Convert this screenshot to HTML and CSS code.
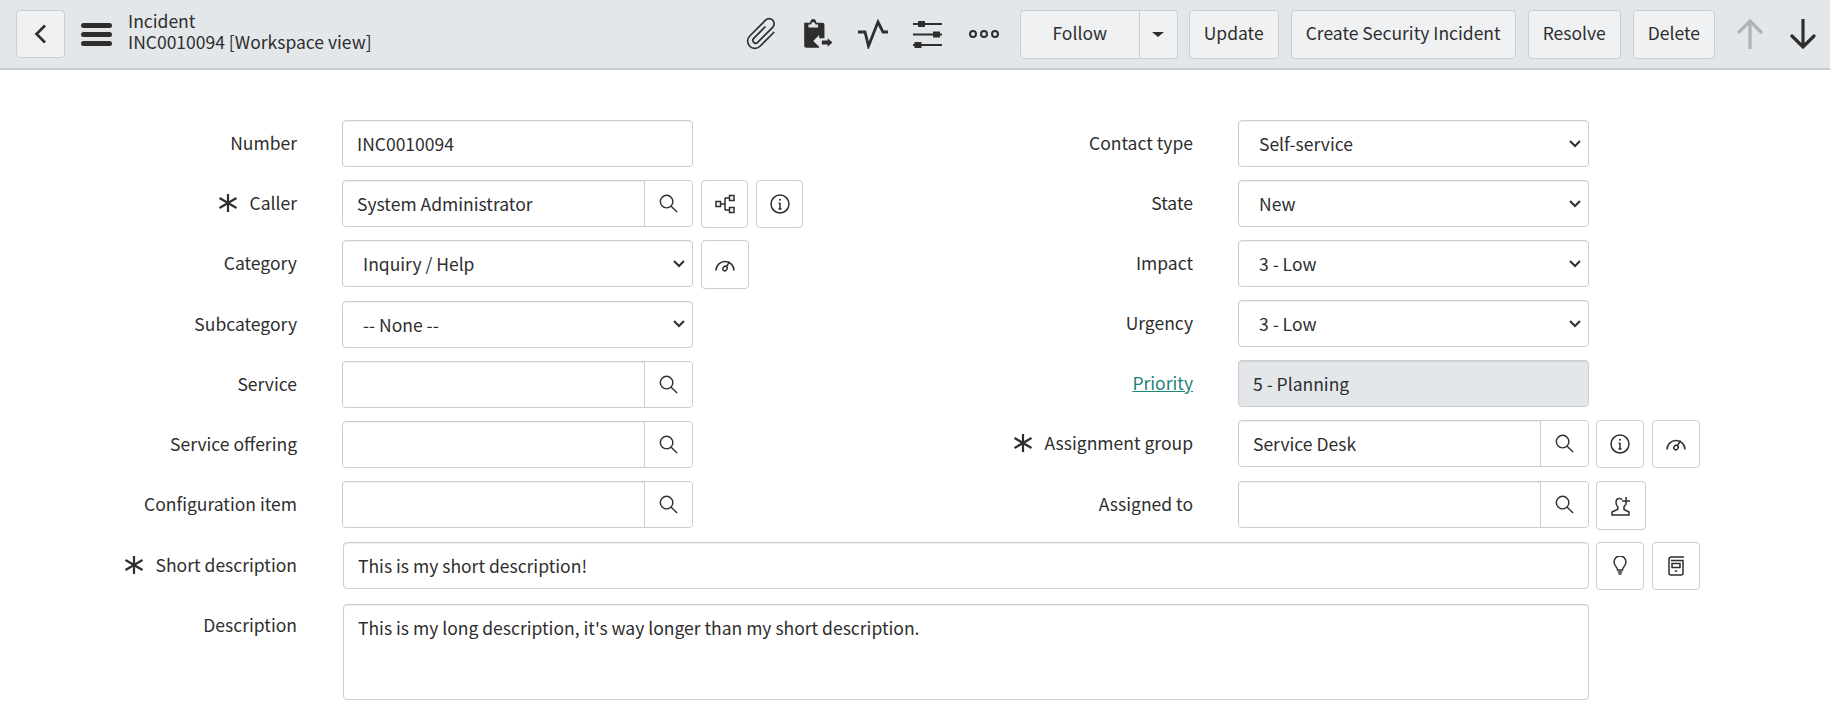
FILE: index.html
```html
<!DOCTYPE html>
<html lang="en">
<head>
    <meta charset="UTF-8">
    <title>Incident | INC0010094</title>
    <link rel="stylesheet" href="styles.css">
</head>
<body>
    <!-- Iconos reutilizables -->
    <svg class="icon-defs" aria-hidden="true">
        <symbol id="i-search" viewBox="0 0 20 20"><circle cx="8" cy="8" r="6.6"/><path d="M12.8 12.8 19 19"/></symbol>
        <symbol id="i-info" viewBox="0 0 20 20"><circle cx="10" cy="10" r="9"/><path d="M10 9v6M8.4 15h3.2M8.6 9H10"/><circle class="dot" cx="10" cy="5.8" r="1"/></symbol>
        <symbol id="i-gauge" viewBox="0 0 20 14"><path d="M1 12.5A9 9 0 0 1 19 12.5"/><ellipse cx="10" cy="10.5" rx="2" ry="2.4" transform="rotate(35 10 10.5)"/><path d="M11.5 8.5 14.6 3.6"/></symbol>
        <symbol id="i-tree" viewBox="0 0 20 20"><path d="M1 7.5h4.5v5H1zM14.500 1.500H19v5h-4.500zM14.500 13.500H19v5h-4.500zM5.500 10H10M10 4h4.500M10 16h4.500M10 4v12"/></symbol>
        <symbol id="i-required" viewBox="0 0 20 18"><path d="M10 0v18M1.500 4 18.500 14M18.500 4 1.500 14"/></symbol>
    </svg>

    <header class="topbar">
        <button class="back-btn" type="button" aria-label="Back">
            <svg width="13" height="20" viewBox="0 0 13 20"><path d="M11 1.500 2.500 10 11 18.500"/></svg>
        </button>
        <div class="hamburger"><span></span><span></span><span></span></div>
        <div class="title">
            <div>Incident</div>
            <div>INC0010094 [Workspace view]</div>
        </div>

        <div class="tools">
            <span class="tool">
                <svg class="stroke-thin" width="38" height="38" viewBox="0 0 34 34"><path transform="rotate(45 17 17)" d="M14.500 10V25a2.500 2.500 0 0 0 5 0V6a4.500 4.500 0 0 0-9 0V26a6.500 6.500 0 0 0 13 0V8"/></svg>
            </span>
            <span class="tool">
                <svg width="32" height="32" viewBox="0 0 30 30"><path class="solid" d="M3 4.500h5.500C9 2 10 1 11.500 1S14 2 14.500 4.500H20a2 2 0 0 1 2 2V19h-5v-3l-5.500 5.500L17 27v1H5a2 2 0 0 1-2-2zM7 6v3h9V6h-2.500c-.5-1.500-1-2-2-2s-1.500.5-2 2z"/><path class="solid" d="M19.500 21.200H25V19l4.500 4-4.500 4v-2.200h-5.500z"/></svg>
            </span>
            <span class="tool">
                <svg class="stroke-bold" width="32" height="30" viewBox="0 0 32 30"><path d="M1 13h7l3.500 14L21 3l5 10h5"/></svg>
            </span>
            <span class="tool">
                <svg width="30" height="27" viewBox="0 0 30 27"><path class="stroke-mid" d="M0 3h29M0 13.500h29M0 24h29"/><path class="solid" d="M5 0h7v6H5zM20 10.500h7v6h-7zM1.500 21h7v6h-7z"/></svg>
            </span>
            <span class="tool">
                <svg class="stroke-mid" width="30" height="10" viewBox="0 0 30 10"><circle cx="4" cy="5" r="3"/><circle cx="15" cy="5" r="3"/><circle cx="26" cy="5" r="3"/></svg>
            </span>
        </div>

        <div class="btn-group">
            <button class="btn btn-follow" type="button">Follow</button>
            <button class="btn btn-caret" type="button" aria-label="More"><i class="caret"></i></button>
        </div>
        <button class="btn" type="button">Update</button>
        <button class="btn" type="button">Create Security Incident</button>
        <button class="btn" type="button">Resolve</button>
        <button class="btn" type="button">Delete</button>

        <span class="arrow arrow-off">
            <svg width="26" height="30" viewBox="0 0 26 30"><path d="M13 29V2M2 13 13 2 24 13"/></svg>
        </span>
        <span class="arrow">
            <svg width="26" height="30" viewBox="0 0 26 30"><path d="M13 1V28M2 17 13 28 24 17"/></svg>
        </span>
    </header>

    <form class="record-form">
        <div class="columns">
            <div class="column">
                <div class="field">
                    <label>Number</label>
                    <input class="control" type="text" value="INC0010094">
                </div>
                <div class="field">
                    <label><svg class="req"><use href="#i-required"/></svg>Caller</label>
                    <div class="lookup">
                        <input type="text" value="System Administrator">
                        <button type="button" aria-label="Search"><svg class="ico-search"><use href="#i-search"/></svg></button>
                    </div>
                    <button class="side-btn narrow" type="button" aria-label="Tree"><svg class="ico-md"><use href="#i-tree"/></svg></button>
                    <button class="side-btn narrow" type="button" aria-label="Info"><svg class="ico-md"><use href="#i-info"/></svg></button>
                </div>
                <div class="field">
                    <label>Category</label>
                    <select class="control"><option>Inquiry / Help</option></select>
                    <button class="side-btn tall" type="button" aria-label="Metric"><svg class="ico-gauge"><use href="#i-gauge"/></svg></button>
                </div>
                <div class="field">
                    <label>Subcategory</label>
                    <select class="control"><option>-- None --</option></select>
                </div>
                <div class="field">
                    <label>Service</label>
                    <div class="lookup">
                        <input type="text">
                        <button type="button" aria-label="Search"><svg class="ico-search"><use href="#i-search"/></svg></button>
                    </div>
                </div>
                <div class="field">
                    <label>Service offering</label>
                    <div class="lookup">
                        <input type="text">
                        <button type="button" aria-label="Search"><svg class="ico-search"><use href="#i-search"/></svg></button>
                    </div>
                </div>
                <div class="field">
                    <label>Configuration item</label>
                    <div class="lookup">
                        <input type="text">
                        <button type="button" aria-label="Search"><svg class="ico-search"><use href="#i-search"/></svg></button>
                    </div>
                </div>
            </div>

            <div class="column column-right">
                <div class="field">
                    <label>Contact type</label>
                    <select class="control"><option>Self-service</option></select>
                </div>
                <div class="field">
                    <label>State</label>
                    <select class="control"><option>New</option></select>
                </div>
                <div class="field">
                    <label>Impact</label>
                    <select class="control"><option>3 - Low</option></select>
                </div>
                <div class="field">
                    <label>Urgency</label>
                    <select class="control"><option>3 - Low</option></select>
                </div>
                <div class="field">
                    <label><a href="#">Priority</a></label>
                    <input class="control readonly" type="text" value="5 - Planning" readonly>
                </div>
                <div class="field field-group">
                    <label><svg class="req"><use href="#i-required"/></svg>Assignment group</label>
                    <div class="lookup">
                        <input type="text" value="Service Desk">
                        <button type="button" aria-label="Search"><svg class="ico-search"><use href="#i-search"/></svg></button>
                    </div>
                    <button class="side-btn" type="button" aria-label="Info"><svg class="ico-md"><use href="#i-info"/></svg></button>
                    <button class="side-btn" type="button" aria-label="Metric"><svg class="ico-gauge"><use href="#i-gauge"/></svg></button>
                </div>
                <div class="field">
                    <label>Assigned to</label>
                    <div class="lookup">
                        <input type="text">
                        <button type="button" aria-label="Search"><svg class="ico-search"><use href="#i-search"/></svg></button>
                    </div>
                    <button class="side-btn wide" type="button" aria-label="Assign to me">
                        <svg class="ico-md" viewBox="0 0 20 20"><path d="M8.500 2.500C6 2.500 5 4.500 5 6.500c0 2 .8 3.500 1.800 4.300v2.500L1 16v3h17v-3l-5-2.500v-2.800c.6-.6 1-1.200 1.200-2"/><path d="M8.500 2.500c1 0 2 .4 2.600 1.100M15 1v8M11 5h8"/></svg>
                    </button>
                </div>
            </div>
        </div>

        <div class="field field-full">
            <label><svg class="req"><use href="#i-required"/></svg>Short description</label>
            <input class="control" type="text" value="This is my short description!">
            <button class="side-btn" type="button" aria-label="Suggestion">
                <svg class="ico-md" viewBox="0 0 20 20"><path d="M7.500 14c0-3-3.500-4-3.500-8a6 6 0 0 1 12 0c0 4-3.500 5-3.500 8zM7.800 16h4.400M8.500 18h3"/></svg>
            </button>
            <button class="side-btn" type="button" aria-label="Knowledge">
                <svg class="ico-md" viewBox="0 0 20 20"><path d="M3 3.500V17a2 2 0 0 0 2 2h10a2 2 0 0 0 2-2V4.500H5M3 3.500A2.500 2.500 0 0 1 5 1h13M6 7.500h8v4H6z"/><path d="M8.800 15h2.400"/></svg>
            </button>
        </div>
        <div class="field field-full field-area">
            <label>Description</label>
            <textarea class="control">This is my long description, it's way longer than my short description.</textarea>
        </div>
    </form>
</body>
</html>
```

FILE: styles.css
```css
* {
    box-sizing: border-box;
}

html, body {
    height: 100%;
}

body {
    margin: 0;
    background: #ffffff;
    color: #2e2e2e;
    font-family: "Noto Sans CJK SC", "Open Sans", sans-serif;
    font-size: 17.5px;
    overflow: hidden;
}

.icon-defs {
    display: none;
}

button, input, select, textarea {
    font-family: inherit;
    font-size: 17.5px;
    color: #2e2e2e;
}

svg {
    fill: none;
    stroke: #2e2e2e;
    stroke-width: 1.5;
}

/* Barra superior */
.topbar {
    display: flex;
    align-items: center;
    height: 70px;
    padding-left: 16px;
    background: #e4e7ea;
    border-bottom: 2px solid #c9cbcd;
}

.back-btn {
    display: flex;
    align-items: center;
    justify-content: center;
    width: 49px;
    height: 48px;
    padding: 0;
    background: #f0f1f3;
    border: 1px solid #cbcdcf;
    border-radius: 4px;
}

.back-btn svg {
    stroke-width: 2.6;
}

.hamburger {
    display: flex;
    flex-direction: column;
    gap: 4px;
    width: 31px;
    margin-left: 16px;
}

.hamburger span {
    height: 5px;
    background: #2e2e2e;
    border-radius: 3px;
}

.title {
    margin-top: -7px;
    margin-left: 16px;
    line-height: 21px;
    white-space: nowrap;
}

.tools {
    display: flex;
    margin-left: auto;
    margin-right: 8px;
}

.tool {
    display: flex;
    align-items: center;
    justify-content: center;
    width: 55.500px;
    height: 48px;
}

.solid {
    fill: #2e2e2e;
    fill-rule: evenodd;
    stroke: none;
}

.stroke-thin {
    stroke-width: 1.500;
}

.stroke-mid {
    stroke-width: 2;
}

.stroke-bold {
    stroke-width: 2.800;
}

.btn {
    height: 49px;
    margin-right: 12px;
    padding: 0 14px 3px;
    background: #f0f1f3;
    border: 1px solid #cbcdcf;
    border-radius: 4px;
    line-height: 1;
    white-space: nowrap;
}

.btn-group {
    display: flex;
    margin-right: 11px;
}

.btn-follow {
    width: 120px;
    margin: 0;
    border-radius: 4px 0 0 4px;
}

.btn-caret {
    display: flex;
    align-items: center;
    justify-content: center;
    width: 38px;
    margin: 0;
    padding: 0;
    border-left: 0;
    border-radius: 0 4px 4px 0;
}

.caret {
    width: 0;
    height: 0;
    border-top: 5px solid #2e2e2e;
    border-left: 6px solid transparent;
    border-right: 6px solid transparent;
}

.arrow {
    display: flex;
    align-items: center;
    justify-content: center;
    width: 55px;
    height: 48px;
}

.arrow svg {
    stroke-width: 3.200;
    stroke-linecap: round;
}

.arrow-off {
    width: 50px;
    margin-left: -2px;
}

.arrow-off svg {
    stroke: #b1b3b5;
}

/* Formulario */
.record-form {
    padding-top: 50px;
}

.columns {
    display: flex;
}

.column {
    width: 896px;
}

.field {
    display: flex;
    align-items: flex-start;
    height: 47.240px;
    margin-bottom: 13px;
}

.column-right .field {
    height: 47px;
}

.column-right .field-group {
    margin-bottom: 14px;
}

.field label {
    display: flex;
    align-items: center;
    justify-content: flex-end;
    flex: 0 0 297px;
    height: 46px;
    margin-right: 45px;
    line-height: 46px;
    white-space: nowrap;
}

.field a {
    color: #1f8476;
}

.req {
    width: 20px;
    height: 18px;
    margin-right: 12px;
    stroke-width: 2.200;
}

.control {
    width: 351px;
    height: 47px;
    padding: 0 14px;
    background: #ffffff;
    border: 1px solid #cbcdcf;
    border-radius: 4px;
    box-shadow: inset 0 1px 1px rgba(0, 0, 0, 0.075);
    outline: none;
}

.column-right .lookup {
    margin-right: -1px;
}

select.control {
    padding: 0 0 0 20px;
    appearance: none;
    background-image: url("data:image/svg+xml,%3Csvg xmlns='http://www.w3.org/2000/svg' width='12' height='8' viewBox='0 0 12 8'%3E%3Cpath d='M1 1l5 5 5-5' fill='none' stroke='%232e2e2e' stroke-width='2'/%3E%3C/svg%3E");
    background-repeat: no-repeat;
    background-position: right 7px center;
}

.readonly {
    background: #e4e7ea;
}

.lookup {
    display: flex;
    width: 351px;
    height: 47px;
    background: #ffffff;
    border: 1px solid #cbcdcf;
    border-radius: 4px;
}

.lookup input {
    flex: 1;
    min-width: 0;
    padding: 0 14px;
    border: none;
    border-radius: 4px 0 0 4px;
    box-shadow: inset 0 1px 1px rgba(0, 0, 0, 0.075);
    outline: none;
}

.lookup button {
    display: flex;
    align-items: center;
    justify-content: center;
    width: 48px;
    padding: 0;
    background: #ffffff;
    border: none;
    border-left: 1px solid #cbcdcf;
    border-radius: 0 4px 4px 0;
}

.side-btn {
    display: flex;
    align-items: center;
    justify-content: center;
    flex: none;
    width: 48px;
    height: 48px;
    margin-left: 8px;
    padding: 0;
    background: #ffffff;
    border: 1px solid #cbcdcf;
    border-radius: 4px;
}

.side-btn.narrow {
    width: 47px;
}

.side-btn.tall {
    height: 49px;
}

.side-btn.wide {
    width: 50px;
    height: 49px;
}

.ico-search {
    width: 19px;
    height: 19px;
}

.ico-md {
    width: 20px;
    height: 20px;
}

.ico-gauge {
    width: 20px;
    height: 14px;
}

.dot {
    fill: #2e2e2e;
    stroke: none;
}

.field-full label {
    margin-right: 46px;
}

.field-full .control {
    width: 1246px;
    margin-right: -1px;
}

.field-area {
    height: 96px;
    margin: 15px 0 0;
}

.field-area label {
    margin-top: -2px;
}

.field-area textarea {
    height: 96px;
    padding: 11px 14px;
    line-height: 24px;
    resize: none;
}
```
